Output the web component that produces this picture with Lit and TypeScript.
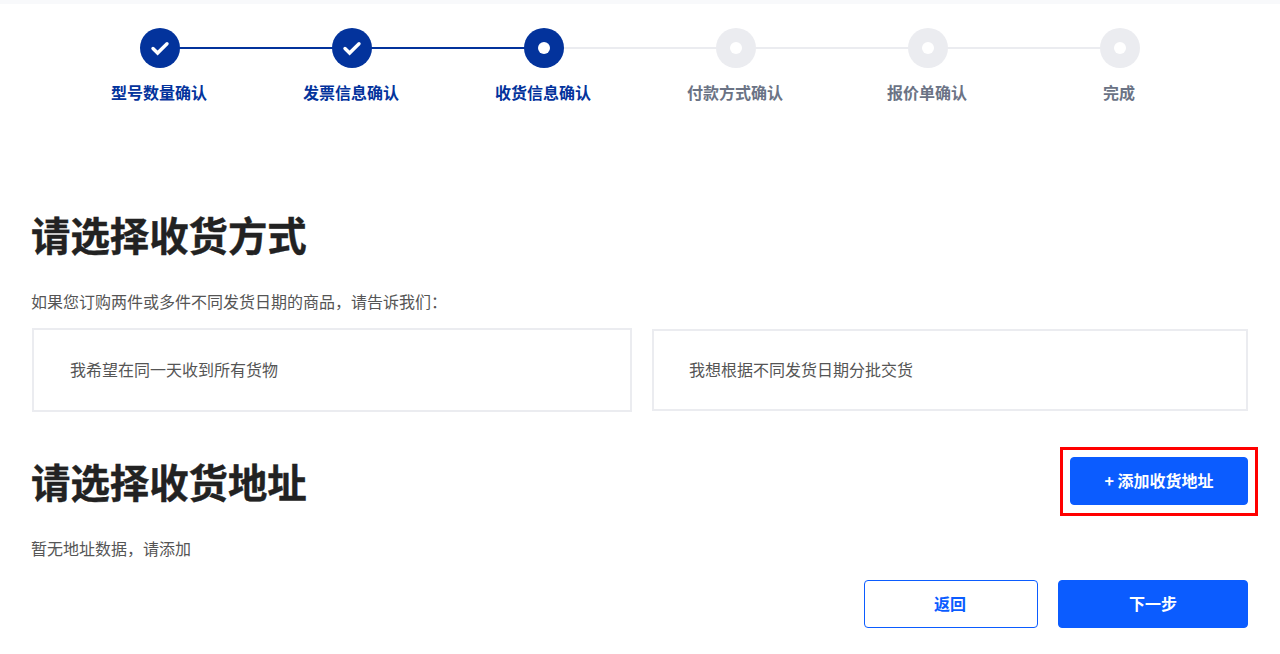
import { LitElement, html, css, svg } from "lit";
import { customElement } from "lit/decorators.js";

type Step = { label: string; state: "done" | "current" | "todo" };
const STEPS: Step[] = [
  { label: "型号数量确认", state: "done" },
  { label: "发票信息确认", state: "done" },
  { label: "收货信息确认", state: "current" },
  { label: "付款方式确认", state: "todo" },
  { label: "报价单确认", state: "todo" },
  { label: "完成", state: "todo" },
];

@customElement("app-root")
export class AppRoot extends LitElement {
  static styles = css`
    :host {
      display: block;
      height: 654px;
      overflow: hidden;
      background: #fff;
      font-family: "Microsoft YaHei", "Noto Sans CJK SC", "Noto Sans", sans-serif;
      color: #555;
    }
    .strip { height: 4px; background: #f8f9fb; }
    .steps { display: flex; padding: 24px 64px 0; }
    .step { width: 192px; display: flex; flex-direction: column; align-items: center; position: relative; }
    .step .line {
      position: absolute; top: 19px; left: 50%; width: 100%; height: 2px; background: #ebecf0;
    }
    .step.lit .line { background: #03339c; }
    .dot {
      width: 40px; height: 40px; border-radius: 50%; background: #ebecf0;
      display: flex; align-items: center; justify-content: center; position: relative; z-index: 1;
    }
    .done .dot, .current .dot { background: #03339c; }
    .pip { width: 12px; height: 12px; border-radius: 50%; background: #fff; }
    .label { margin-top: 12px; margin-right: 2px; font-size: 16px; line-height: 24px; font-weight: 700; color: #6b7385; }
    .done .label, .current .label { color: #03339c; }
    .main { padding: 0 32px; }
    h2 {
      margin: 0 0 0 -1px; font-size: 39.4px; line-height: 56px; font-weight: 700; color: #222;
      -webkit-text-stroke: 0.4px #222;
    }
    .h1 { margin-top: 102px; }
    p { margin: 0 0 0 -1px; font-size: 16px; line-height: 24px; color: #555; }
    .hint { margin-top: 27px; }
    .cards { display: flex; gap: 20px; align-items: center; margin-top: 15px; }
    .card {
      box-sizing: border-box; border: 2px solid #ebecf0; display: flex; align-items: center;
      padding: 0 0 2px 36px; font-size: 16px; color: #555;
    }
    .card.a { width: 600px; height: 84px; }
    .card.b { width: 596px; height: 82px; padding-left: 35px; }
    .addr { display: flex; justify-content: space-between; align-items: flex-start; margin-top: 45px; }
    .addr h2 { margin-top: -4px; }
    .addr-btn { position: relative; }
    .mark {
      position: absolute; left: -10px; top: -10px; width: 198px; height: 69px; box-sizing: border-box;
      border: 3px solid #f00; pointer-events: none;
    }
    button {
      font: inherit; font-weight: 700; font-size: 16px; border-radius: 4px; cursor: pointer;
      padding: 0 0 2px; box-sizing: border-box; height: 48px;
      border: 1px solid #0b5cff; background: #0b5cff; color: #fff;
    }
    .add { width: 178px; display: block; }
    .empty { margin-top: 27px; }
    .foot { display: flex; justify-content: flex-end; gap: 20px; margin-top: 20px; }
    .back { width: 174px; background: #fff; color: #0b5cff; padding-right: 2px; }
    .next { width: 190px; }
  `;

  private check() {
    return svg`<svg width="20" height="20" viewBox="0 0 20 20"><path d="M3 10.5 L7.6 15 L17 5.8" fill="none" stroke="#fff" stroke-width="3.4" stroke-linecap="round"/></svg>`;
  }

  render() {
    return html`
      <div class="strip"></div>
      <div class="steps">
        ${STEPS.map(
          (s, i) => html`
            <div class="step ${s.state} ${s.state === "done" ? "lit" : ""}">
              ${i < STEPS.length - 1 ? html`<div class="line"></div>` : ""}
              <div class="dot">${s.state === "done" ? this.check() : html`<div class="pip"></div>`}</div>
              <div class="label">${s.label}</div>
            </div>
          `
        )}
      </div>
      <div class="main">
        <h2 class="h1">请选择收货方式</h2>
        <p class="hint">如果您订购两件或多件不同发货日期的商品，请告诉我们：</p>
        <div class="cards">
          <div class="card a">我希望在同一天收到所有货物</div>
          <div class="card b">我想根据不同发货日期分批交货</div>
        </div>
        <div class="addr">
          <h2>请选择收货地址</h2>
          <div class="addr-btn">
            <button class="add">+ 添加收货地址</button>
            <div class="mark"></div>
          </div>
        </div>
        <p class="empty">暂无地址数据，请添加</p>
        <div class="foot">
          <button class="back">返回</button>
          <button class="next">下一步</button>
        </div>
      </div>
    `;
  }
}
